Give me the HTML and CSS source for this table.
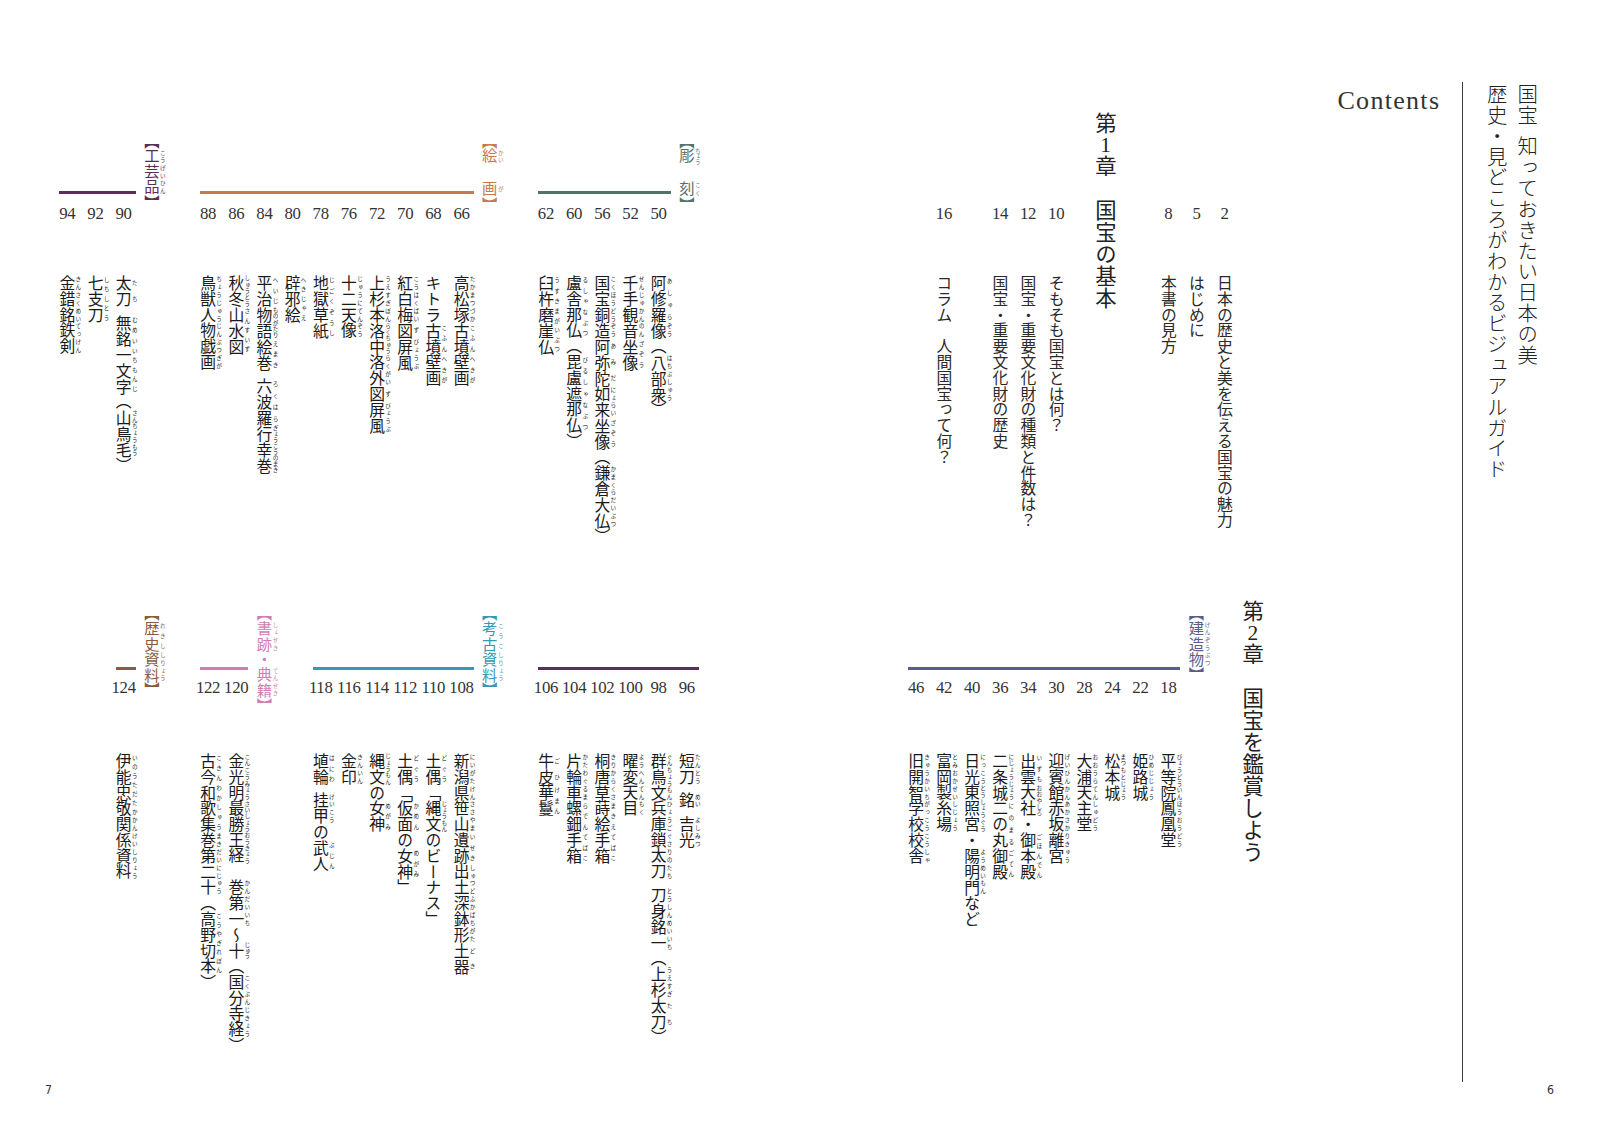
FILE: index.html
```html
<!DOCTYPE html>
<html lang="ja">
<head>
<meta charset="utf-8">
<title>Contents</title>
<link rel="stylesheet" href="styles.css">
</head>
<body>
<div class="spread">

  <section class="page page-left">
    <div class="band band-top">
      <div class="group g-chokoku">
        <div class="lab"><div class="lv j"><span><span class="br">【</span><ruby>彫<rt>ちょう</rt></ruby></span><span><ruby>刻<rt>こく</rt></ruby><span class="br">】</span></span></div></div>
        <div class="body">
          <div class="rule"></div>
          <div class="nums"><span class="n">50</span><span class="n">52</span><span class="n">56</span><span class="n">60</span><span class="n">62</span></div>
          <div class="items">
            <div class="c"><p class="v"><ruby>阿修羅<rt>あしゅら</rt></ruby><ruby>像<rt>ぞう</rt></ruby>（<ruby>八部衆<rt>はちぶしゅう</rt></ruby>）</p></div>
            <div class="c"><p class="v"><ruby>千手<rt>せんじゅ</rt></ruby><ruby>観音<rt>かんのん</rt></ruby><ruby>坐像<rt>ざぞう</rt></ruby></p></div>
            <div class="c"><p class="v"><ruby>国宝<rt>こくほう</rt></ruby><ruby>銅造<rt>どうぞう</rt></ruby><ruby>阿弥陀<rt>あみだ</rt></ruby><ruby>如来<rt>にょらい</rt></ruby><ruby>坐像<rt>ざぞう</rt></ruby>（<ruby>鎌倉<rt>かまくら</rt></ruby><ruby>大仏<rt>だいぶつ</rt></ruby>）</p></div>
            <div class="c"><p class="v"><ruby>盧舎那仏<rt>るしゃなぶつ</rt></ruby>（<ruby>毘盧遮那仏<rt>びるしゃなぶつ</rt></ruby>）</p></div>
            <div class="c"><p class="v"><ruby>臼杵<rt>うすき</rt></ruby><ruby>磨崖仏<rt>まがいぶつ</rt></ruby></p></div>
          </div>
        </div>
      </div>

      <div class="group g-kaiga">
        <div class="lab"><div class="lv j"><span><span class="br">【</span><ruby>絵<rt>かい</rt></ruby></span><span><ruby>画<rt>が</rt></ruby><span class="br">】</span></span></div></div>
        <div class="body">
          <div class="rule"></div>
          <div class="nums"><span class="n">66</span><span class="n">68</span><span class="n">70</span><span class="n">72</span><span class="n">76</span><span class="n">78</span><span class="n">80</span><span class="n">84</span><span class="n">86</span><span class="n">88</span></div>
          <div class="items">
            <div class="c"><p class="v"><ruby>高松塚<rt>たかまつづか</rt></ruby><ruby>古墳<rt>こふん</rt></ruby><ruby>壁画<rt>へきが</rt></ruby></p></div>
            <div class="c"><p class="v">キトラ<ruby>古墳<rt>こふん</rt></ruby><ruby>壁画<rt>へきが</rt></ruby></p></div>
            <div class="c"><p class="v"><ruby>紅白梅<rt>こうはくばい</rt></ruby><ruby>図<rt>ず</rt></ruby><ruby>屏風<rt>びょうぶ</rt></ruby></p></div>
            <div class="c"><p class="v"><ruby>上杉本<rt>うえすぎぼん</rt></ruby><ruby>洛中<rt>らくちゅう</rt></ruby><ruby>洛外<rt>らくがい</rt></ruby><ruby>図<rt>ず</rt></ruby><ruby>屏風<rt>びょうぶ</rt></ruby></p></div>
            <div class="c"><p class="v"><ruby>十二天像<rt>じゅうにてんぞう</rt></ruby></p></div>
            <div class="c"><p class="v"><ruby>地獄<rt>じごく</rt></ruby><ruby>草紙<rt>ぞうし</rt></ruby></p></div>
            <div class="c"><p class="v"><ruby>辟邪絵<rt>へきじゃえ</rt></ruby></p></div>
            <div class="c"><p class="v"><ruby>平治<rt>へいじ</rt></ruby><ruby>物語<rt>ものがたり</rt></ruby><ruby>絵巻<rt>えまき</rt></ruby>&ensp;<ruby>六波羅<rt>ろくはら</rt></ruby><ruby>行幸巻<rt>ぎょうこうのまき</rt></ruby></p></div>
            <div class="c"><p class="v"><ruby>秋冬<rt>しゅうとう</rt></ruby><ruby>山水図<rt>さんすいず</rt></ruby></p></div>
            <div class="c"><p class="v"><ruby>鳥獣人物戯画<rt>ちょうじゅうじんぶつぎが</rt></ruby></p></div>
          </div>
        </div>
      </div>

      <div class="group g-kogei">
        <div class="lab"><div class="lv"><span class="br">【</span><ruby>工芸品<rt>こうげいひん</rt></ruby><span class="br">】</span></div></div>
        <div class="body">
          <div class="rule"></div>
          <div class="nums"><span class="n">90</span><span class="n">92</span><span class="n">94</span></div>
          <div class="items">
            <div class="c"><p class="v"><ruby>太刀<rt>たち</rt></ruby>&ensp;<ruby>無銘<rt>むめい</rt></ruby><ruby>一文字<rt>いちもんじ</rt></ruby>（<ruby>山鳥毛<rt>さんちょうもう</rt></ruby>）</p></div>
            <div class="c"><p class="v"><ruby>七支刀<rt>しちしとう</rt></ruby></p></div>
            <div class="c"><p class="v"><ruby>金錯銘鉄剣<rt>きんさくめいてっけん</rt></ruby></p></div>
          </div>
        </div>
      </div>
    </div>

    <div class="band band-bottom">
      <div class="group g-kogei">
        <div class="body">
          <div class="rule"></div>
          <div class="nums"><span class="n">96</span><span class="n">98</span><span class="n">100</span><span class="n">102</span><span class="n">104</span><span class="n">106</span></div>
          <div class="items">
            <div class="c"><p class="v"><ruby>短刀<rt>たんとう</rt></ruby>&ensp;<ruby>銘<rt>めい</rt></ruby>&ensp;<ruby>吉光<rt>よしみつ</rt></ruby></p></div>
            <div class="c"><p class="v"><ruby>群鳥文<rt>ぐんちょうもん</rt></ruby><ruby>兵庫鎖太刀<rt>ひょうごぐさりのたち</rt></ruby>&ensp;<ruby>刀身銘<rt>とうしんめい</rt></ruby><ruby>一<rt>いち</rt></ruby>（<ruby>上杉<rt>うえすぎ</rt></ruby><ruby>太刀<rt>たち</rt></ruby>）</p></div>
            <div class="c"><p class="v"><ruby>曜変<rt>ようへん</rt></ruby><ruby>天目<rt>てんもく</rt></ruby></p></div>
            <div class="c"><p class="v"><ruby>桐唐草<rt>きりからくさ</rt></ruby><ruby>蒔絵<rt>まきえ</rt></ruby><ruby>手箱<rt>てばこ</rt></ruby></p></div>
            <div class="c"><p class="v"><ruby>片輪車<rt>かたわぐるま</rt></ruby><ruby>螺鈿<rt>らでん</rt></ruby><ruby>手箱<rt>てばこ</rt></ruby></p></div>
            <div class="c"><p class="v"><ruby>牛皮<rt>ごひ</rt></ruby><ruby>華鬘<rt>けまん</rt></ruby></p></div>
          </div>
        </div>
      </div>

      <div class="group g-koko">
        <div class="lab"><div class="lv"><span class="br">【</span><ruby>考古<rt>こうこ</rt></ruby><ruby>資料<rt>しりょう</rt></ruby><span class="br">】</span></div></div>
        <div class="body">
          <div class="rule"></div>
          <div class="nums"><span class="n">108</span><span class="n">110</span><span class="n">112</span><span class="n">114</span><span class="n">116</span><span class="n">118</span></div>
          <div class="items">
            <div class="c"><p class="v"><ruby>新潟県<rt>にいがたけん</rt></ruby><ruby>笹山<rt>ささやま</rt></ruby><ruby>遺跡<rt>いせき</rt></ruby><ruby>出土<rt>しゅつど</rt></ruby><ruby>深鉢形<rt>ふかばちがた</rt></ruby><ruby>土器<rt>どき</rt></ruby></p></div>
            <div class="c"><p class="v"><ruby>土偶<rt>どぐう</rt></ruby>「<ruby>縄文<rt>じょうもん</rt></ruby>のビーナス」</p></div>
            <div class="c"><p class="v"><ruby>土偶<rt>どぐう</rt></ruby>「<ruby>仮面<rt>かめん</rt></ruby>の<ruby>女神<rt>めがみ</rt></ruby>」</p></div>
            <div class="c"><p class="v"><ruby>縄文<rt>じょうもん</rt></ruby>の<ruby>女神<rt>めがみ</rt></ruby></p></div>
            <div class="c"><p class="v"><ruby>金印<rt>きんいん</rt></ruby></p></div>
            <div class="c"><p class="v"><ruby>埴輪<rt>はにわ</rt></ruby>&ensp;<ruby>挂甲<rt>けいこう</rt></ruby>の<ruby>武人<rt>ぶじん</rt></ruby></p></div>
          </div>
        </div>
      </div>

      <div class="group g-shoseki">
        <div class="lab"><div class="lv"><span class="br">【</span><ruby>書跡<rt>しょせき</rt></ruby>・<ruby>典籍<rt>てんせき</rt></ruby><span class="br">】</span></div></div>
        <div class="body">
          <div class="rule"></div>
          <div class="nums"><span class="n">120</span><span class="n">122</span></div>
          <div class="items">
            <div class="c"><p class="v"><ruby>金光明<rt>こんこうみょう</rt></ruby><ruby>最勝王経<rt>さいしょうおうきょう</rt></ruby>　<ruby>巻第一<rt>かんだいいち</rt></ruby>〜<ruby>十<rt>じゅう</rt></ruby>（<ruby>国分寺経<rt>こくぶんじきょう</rt></ruby>）</p></div>
            <div class="c"><p class="v"><ruby>古今和歌集<rt>こきんわかしゅう</rt></ruby><ruby>巻第二十<rt>まきだいにじゅう</rt></ruby>（<ruby>高野切本<rt>こうやぎれぼん</rt></ruby>）</p></div>
          </div>
        </div>
      </div>

      <div class="group g-rekishi">
        <div class="lab"><div class="lv"><span class="br">【</span><ruby>歴史<rt>れきし</rt></ruby><ruby>資料<rt>しりょう</rt></ruby><span class="br">】</span></div></div>
        <div class="body">
          <div class="rule"></div>
          <div class="nums"><span class="n">124</span></div>
          <div class="items">
            <div class="c"><p class="v"><ruby>伊能忠敬<rt>いのうただたか</rt></ruby><ruby>関係資料<rt>かんけいしりょう</rt></ruby></p></div>
          </div>
        </div>
      </div>
    </div>

    <div class="folio folio-left">7</div>
  </section>

  <section class="page page-right">
    <div class="row">
      <div class="main">
        <div class="contents">Contents</div>

        <div class="band band-top rband-top">
          <div class="body">
            <div class="rule none"></div>
            <div class="nums"><span class="n">2</span><span class="n">5</span><span class="n">8</span></div>
            <div class="items">
              <div class="c plain"><p class="v">日本の歴史と美を伝える国宝の魅力</p></div>
              <div class="c plain"><p class="v">はじめに</p></div>
              <div class="c plain"><p class="v">本書の見方</p></div>
            </div>
          </div>
          <div class="chap chap1"><h2 class="ch">第<span class="tcy">1</span>章　国宝の基本</h2></div>
          <div class="body">
            <div class="rule none"></div>
            <div class="nums"><span class="n">10</span><span class="n">12</span><span class="n">14</span><span class="n"></span><span class="n">16</span></div>
            <div class="items">
              <div class="c plain"><p class="v">そもそも国宝とは何？</p></div>
              <div class="c plain"><p class="v">国宝・重要文化財の種類と件数は？</p></div>
              <div class="c plain"><p class="v">国宝・重要文化財の歴史</p></div>
              <div class="c plain"></div>
              <div class="c plain"><p class="v">コラム　人間国宝って何？</p></div>
            </div>
          </div>
        </div>

        <div class="band band-bottom rband-bottom">
          <div class="chap chap2"><h2 class="ch">第<span class="tcy">2</span>章　国宝を鑑賞しよう</h2></div>
          <div class="group g-kenzo">
            <div class="lab"><div class="lv"><span class="br">【</span><ruby>建造物<rt>けんぞうぶつ</rt></ruby><span class="br">】</span></div></div>
            <div class="body">
              <div class="rule"></div>
              <div class="nums"><span class="n">18</span><span class="n">22</span><span class="n">24</span><span class="n">28</span><span class="n">30</span><span class="n">34</span><span class="n">36</span><span class="n">40</span><span class="n">42</span><span class="n">46</span></div>
              <div class="items">
                <div class="c"><p class="v"><ruby>平等院<rt>びょうどういん</rt></ruby><ruby>鳳凰堂<rt>ほうおうどう</rt></ruby></p></div>
                <div class="c"><p class="v"><ruby>姫路城<rt>ひめじじょう</rt></ruby></p></div>
                <div class="c"><p class="v"><ruby>松本城<rt>まつもとじょう</rt></ruby></p></div>
                <div class="c"><p class="v"><ruby>大浦<rt>おおうら</rt></ruby><ruby>天主堂<rt>てんしゅどう</rt></ruby></p></div>
                <div class="c"><p class="v"><ruby>迎賓館<rt>げいひんかん</rt></ruby><ruby>赤坂<rt>あかさか</rt></ruby><ruby>離宮<rt>りきゅう</rt></ruby></p></div>
                <div class="c"><p class="v"><ruby>出雲<rt>いずも</rt></ruby><ruby>大社<rt>おおやしろ</rt></ruby>・<ruby>御本殿<rt>ごほんでん</rt></ruby></p></div>
                <div class="c"><p class="v"><ruby>二条城<rt>にじょうじょう</rt></ruby><ruby>二の丸<rt>にのまる</rt></ruby><ruby>御殿<rt>ごてん</rt></ruby></p></div>
                <div class="c"><p class="v"><ruby>日光<rt>にっこう</rt></ruby><ruby>東照宮<rt>とうしょうぐう</rt></ruby>・<ruby>陽明門<rt>ようめいもん</rt></ruby>など</p></div>
                <div class="c"><p class="v"><ruby>富岡<rt>とみおか</rt></ruby><ruby>製糸場<rt>せいしじょう</rt></ruby></p></div>
                <div class="c"><p class="v"><ruby>旧開智<rt>きゅうかいち</rt></ruby><ruby>学校<rt>がっこう</rt></ruby><ruby>校舎<rt>こうしゃ</rt></ruby></p></div>
              </div>
            </div>
          </div>
        </div>
      </div>
      <div class="divider"></div>
      <div class="titlebox">
        <h1 class="title">国宝&ensp;知っておきたい日本の美<br>歴史・見どころがわかるビジュアルガイド</h1>
      </div>
    </div>
    <div class="folio folio-right">6</div>
  </section>

</div>
</body>
</html>
```

FILE: styles.css
```css
* {
  box-sizing: border-box;
  margin: 0;
  padding: 0;
}

html, body {
  background: #ffffff;
}

body {
  width: 1599px;
  height: 1130px;
  overflow: hidden;
  font-family: "Noto Sans CJK JP", "Noto Sans", sans-serif;
  color: #1c1c1c;
}

.spread {
  display: flex;
  width: 1599px;
  height: 1130px;
}

/* ---------- pages ---------- */
.page {
  display: flex;
  flex-direction: column;
}

.page-left {
  width: 800px;
  padding-top: 112.2px;
  --cw: 28.16px;
}

.page-right {
  width: 799px;
  padding-top: 81.6px;
  --cw: 28.06px;
}

.row {
  display: flex;
  height: 1000px;
}

.main {
  width: 662px;
  display: flex;
  flex-direction: column;
}

.divider {
  width: 1px;
  height: 1000px;
  background: #3a3a3a;
}

.titlebox {
  padding-left: 18.6px;
}

.title {
  writing-mode: vertical-rl;
  font-size: 20.4px;
  font-weight: 300;
  line-height: 30.6px;
  letter-spacing: 0.45px;
  white-space: nowrap;
  margin-top: 2px;
  color: #222;
}

.contents {
  height: 30.6px;
  padding-top: 6.6px;
  padding-right: 21.7px;
  text-align: right;
  font-family: "Liberation Serif", serif;
  font-size: 26px;
  line-height: 26px;
  letter-spacing: 1.3px;
  color: #333;
}

/* ---------- bands ---------- */
.band {
  display: flex;
  flex-direction: row-reverse;
  align-items: flex-start;
}

.band-top {
  height: 487.8px;
  --line-top: 78.6px;
  --lab-top: 28.6px;
  --num-gap: 13.3px;
  --item-gap: 54.1px;
}

.band-bottom {
  height: 481.6px;
  --line-top: 67.3px;
  --lab-top: 13.3px;
  --num-gap: 11.2px;
  --item-gap: 57.1px;
}

.page-left .band {
  padding-right: 99.2px;
  gap: 28.16px;
}

.rband-top {
  padding-right: 223.5px;
}

.rband-bottom {
  padding-right: 195.4px;
}

/* ---------- groups ---------- */
.group {
  display: flex;
  flex-direction: row-reverse;
  align-items: flex-start;
}

.g-chokoku { --col: #56706a; }
.g-kaiga { --col: #c9794b; }
.g-kogei { --col: #5b2d57; }
.g-kenzo { --col: #5c5b8e; }
.g-koko { --col: #3499b5; }
.g-shoseki { --col: #d27db2; }
.g-rekishi { --col: #8b5b3f; }

.lab {
  width: var(--cw);
  margin-top: var(--lab-top);
  display: flex;
  justify-content: flex-end;
}

.lv {
  writing-mode: vertical-rl;
  font-size: 15.3px;
  line-height: 1;
  white-space: nowrap;
  color: var(--col);
}

.lv.j {
  height: 63.3px;
  display: flex;
  justify-content: space-between;
}

.br {
  font-feature-settings: "vhal" 1;
}

.body {
  margin-top: var(--line-top);
}

.rule {
  height: 3px;
  margin: 0 2px 0 6px;
  background: var(--col);
}

.rule.none {
  background: transparent;
}

.nums {
  display: flex;
  flex-direction: row-reverse;
  margin-top: var(--num-gap);
}

.n {
  width: var(--cw);
  height: 14.3px;
  text-align: center;
  font-family: "Liberation Serif", serif;
  font-size: 16.8px;
  line-height: 14.3px;
  letter-spacing: -0.3px;
  color: #333;
}

.items {
  display: flex;
  flex-direction: row-reverse;
  margin-top: var(--item-gap);
}

.c {
  width: var(--cw);
  display: flex;
  justify-content: flex-end;
}

.c.plain {
  justify-content: center;
}

.v {
  writing-mode: vertical-rl;
  font-size: 15.8px;
  font-weight: 400;
  line-height: 1;
  white-space: nowrap;
  color: #1a1a1a;
}

.c.plain .v {
  color: #2a2a2a;
}

rt {
  font-size: 5.6px;
  line-height: 1;
  font-weight: 400;
}

/* ---------- chapter headings ---------- */
.chap {
  display: flex;
  justify-content: flex-end;
}

.chap1 {
  width: 84.2px;
  padding-right: 37.8px;
}

.chap2 {
  width: 28.06px;
  margin-left: 28.06px;
  justify-content: center;
}

.ch {
  writing-mode: vertical-rl;
  font-size: 21.4px;
  font-weight: 400;
  line-height: 1;
  letter-spacing: 0.6px;
  white-space: nowrap;
  color: #222;
}

.tcy {
  text-combine-upright: all;
  font-family: "Liberation Serif", serif;
  font-weight: 400;
}

/* ---------- folios ---------- */
.folio {
  margin-top: 1px;
  height: 14.3px;
  font-family: "Liberation Sans Narrow", "DejaVu Sans Condensed", "Liberation Sans", sans-serif;
  font-size: 12.2px;
  line-height: 14.3px;
  color: #333;
}

.folio-left {
  padding-left: 45px;
}

.folio-right {
  text-align: right;
  padding-right: 45px;
}
```
